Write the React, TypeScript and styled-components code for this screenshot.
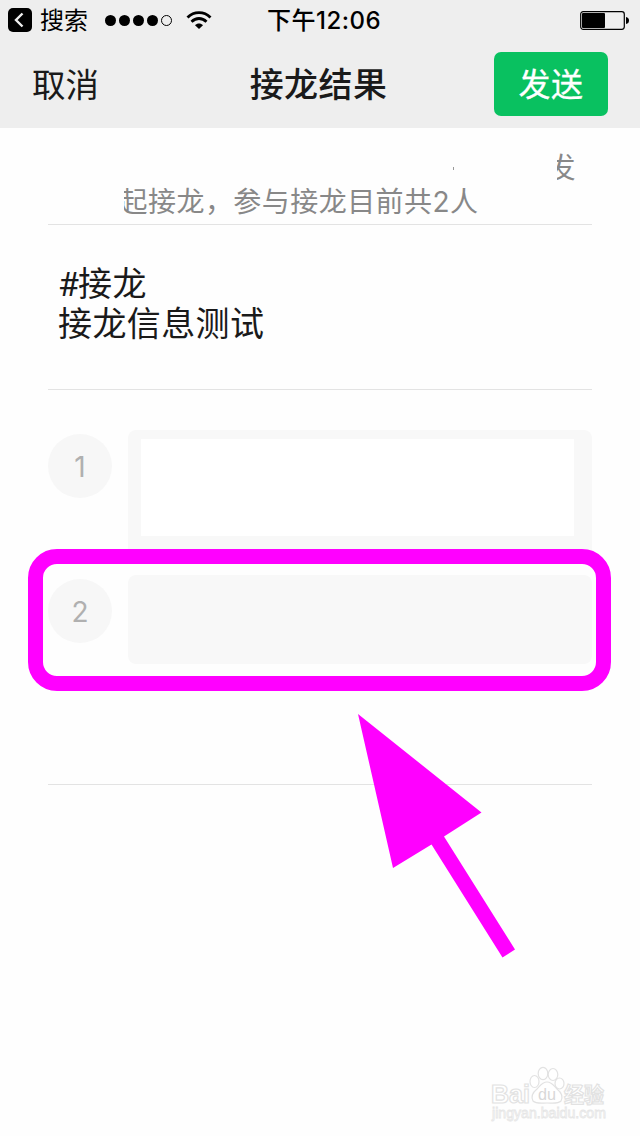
import React from "react";
import styled, { createGlobalStyle } from "styled-components";

const GlobalStyle = createGlobalStyle`
  * { box-sizing: border-box; }
  body {
    margin: 0;
    background: #fefefe;
    font-family: Inter, "Noto Sans CJK SC", sans-serif;
    color: #1a1a1a;
  }
`;

const Screen = styled.div`
  position: relative;
  width: 640px;
  height: 1136px;
  overflow: hidden;
  display: flex;
  flex-direction: column;
`;

const Header = styled.header`
  height: 128px;
  background: #eeeeee;
`;

const StatusBar = styled.div`
  height: 40px;
  display: grid;
  grid-template-columns: 230px 1fr 230px;
  align-items: center;
  color: #000;
`;

const StatusLeft = styled.div`
  display: flex;
  align-items: center;
  padding-left: 8px;
`;

const BackLabel = styled.span`
  margin-left: 8px;
  width: 65px;
  padding-top: 1px;
  font-size: 24px;
  line-height: 38px;
`;

const WifiIcon = styled.svg`
  margin-left: 13px;
`;

const Clock = styled.div`
  text-align: center;
  font-size: 24px;
  line-height: 38px;
  font-weight: 500;
  letter-spacing: 0.5px;
  padding: 2px 0 0 8px;
  white-space: nowrap;
`;

const StatusRight = styled.div`
  display: flex;
  justify-content: flex-end;
  padding-right: 10px;
`;

const NavBar = styled.nav`
  height: 88px;
  display: grid;
  grid-template-columns: 200px 1fr 200px;
  align-items: center;
  padding: 0 32px;
`;

const Cancel = styled.span`
  padding-top: 2px;
  font-size: 33.5px;
  line-height: 64px;
`;

const Title = styled.h1`
  margin: 0;
  padding: 2px 3px 0 0;
  font-size: 34px;
  line-height: 64px;
  font-weight: 500;
  letter-spacing: 0.4px;
  text-align: center;
  white-space: nowrap;
`;

const SendButton = styled.button`
  justify-self: end;
  width: 114px;
  height: 64px;
  padding: 2px 0 0 0;
  border: 0;
  border-radius: 7px;
  background: #09c160;
  color: #fff;
  font: 400 32px/62px Inter, "Noto Sans CJK SC", sans-serif;
  letter-spacing: 0.6px;
  -webkit-text-stroke: 0.3px #fff;
`;

const Content = styled.main`
  padding: 0 48px;
`;

const Summary = styled.section`
  height: 97px;
  padding: 23px 0 0 76px;
  border-bottom: 1px solid #e3e3e3;
  color: #888;
  font-size: 28px;
  line-height: 34px;
  letter-spacing: 0.45px;
`;

const SummaryLine = styled.div<{ $start: number }>`
  display: flex;
  align-items: center;
  height: 34px;
  padding-left: ${(p) => p.$start}px;
  white-space: nowrap;
`;

const Speck = styled.i`
  width: 1px;
  height: 3px;
  margin-right: 103px;
  background: #999;
`;

const Clip = styled.span<{ $width: number }>`
  display: flex;
  justify-content: flex-end;
  width: ${(p) => p.$width}px;
  overflow: hidden;
`;

const Message = styled.section`
  height: 165px;
  padding: 39px 10px 0;
  border-bottom: 1px solid #e3e3e3;
  font-size: 34px;
  line-height: 40px;
  letter-spacing: 0.4px;
`;

const Hash = styled.span`
  display: inline-block;
  width: 20px;
  font-family: Roboto, sans-serif;
  letter-spacing: 0;
`;

const Entries = styled.section`
  height: 395px;
  padding-top: 40px;
  border-bottom: 1px solid #e3e3e3;
`;

const Entry = styled.div<{ $height: number }>`
  display: flex;
  gap: 16px;
  height: ${(p) => p.$height}px;
  margin-bottom: 16px;
`;

const Index = styled.span`
  width: 64px;
  height: 64px;
  margin-top: 4px;
  padding-top: 1px;
  border-radius: 50%;
  background: #f7f7f7;
  color: #b0b0b0;
  font-size: 28px;
  line-height: 64px;
  text-align: center;
`;

const Field = styled.div`
  flex: 1;
  padding: 9px 18px 13px 13px;
  border-radius: 8px;
  background: #f8f8f8;
`;

const Blank = styled.div`
  height: 97px;
  background: #fff;
`;

const Highlight = styled.div`
  position: absolute;
  left: 28px;
  top: 549px;
  width: 583px;
  height: 142px;
  border: 15px solid #ff00ff;
  border-radius: 29px;
`;

const Arrow = styled.svg`
  position: absolute;
  left: 350px;
  top: 705px;
`;

const Watermark = styled.svg`
  position: absolute;
  left: 484px;
  top: 1060px;
  font-family: "Liberation Sans", "Noto Sans CJK SC", sans-serif;
`;

export default function App() {
  return (
    <Screen>
      <GlobalStyle />
      <Header>
        <StatusBar>
          <StatusLeft>
            <svg width="24" height="24" viewBox="0 0 24 24">
              <rect width="24" height="24" rx="5" />
              <path d="M14.500 5.500 8 12l6.500 6.500" fill="none" stroke="#eee" strokeWidth="2.400" />
            </svg>
            <BackLabel>搜索</BackLabel>
            <svg width="68" height="12" viewBox="0 0 68 12">
              {[5.5, 19.5, 33.5, 47.5].map((x) => (
                <circle key={x} cx={x} cy="6.500" r="5.500" />
              ))}
              <circle cx="61.500" cy="6.500" r="5" fill="none" stroke="#000" />
            </svg>
            <WifiIcon width="26" height="20" viewBox="0 0 26 20">
              <g fill="none" stroke="#000" strokeWidth="2.800">
                <path d="M1.500 7.500C8 1 18 1 24.500 7.500" />
                <path d="M5.500 11.800C10 7.400 16 7.400 20.500 11.800" />
              </g>
              <path d="M13 19 9 15.200c2.200-2.200 5.800-2.200 8 0Z" />
            </WifiIcon>
          </StatusLeft>
          <Clock>下午12:06</Clock>
          <StatusRight>
            <svg width="50" height="20" viewBox="0 0 50 20">
              <rect x="0.700" y="1.700" width="43.600" height="17.600" rx="2.500" fill="none" stroke="#000" strokeWidth="1.200" />
              <rect x="2" y="3" width="23" height="15" rx="1" />
              <path d="M46 7q3 .5 3 3.500t-3 3.500Z" />
            </svg>
          </StatusRight>
        </StatusBar>
        <NavBar>
          <Cancel>取消</Cancel>
          <Title>接龙结果</Title>
          <SendButton>发送</SendButton>
        </NavBar>
      </Header>
      <Content>
        <Summary>
          <SummaryLine $start={329}>
            <Speck />
            <Clip $width={19}>发</Clip>
          </SummaryLine>
          <SummaryLine $start={0}>
            <Clip $width={24}>起</Clip>接龙，参与接龙目前共2人
          </SummaryLine>
        </Summary>
        <Message>
          <Hash>#</Hash>接龙
          <br />
          接龙信息测试
        </Message>
        <Entries>
          <Entry $height={129}>
            <Index>1</Index>
            <Field>
              <Blank />
            </Field>
          </Entry>
          <Entry $height={89}>
            <Index>2</Index>
            <Field />
          </Entry>
        </Entries>
      </Content>
      <Highlight />
      <Arrow width="170" height="260" viewBox="350 705 170 260">
        <path d="M358 714 481.500 812.500 444 836.500 515 949.500 502.500 957.500 431.500 844.500 393 868Z" fill="#f0f" />
      </Arrow>
      <Watermark width="130" height="70" viewBox="484 1060 130 70">
        <g fill="#fff" stroke="#e2e2e2" strokeWidth="1.200">
          <text x="491" y="1103" fontSize="26" fontWeight="700" textLength="39" lengthAdjust="spacingAndGlyphs">Bai</text>
          <text x="564" y="1102" fontSize="21" fontWeight="700" textLength="40" lengthAdjust="spacingAndGlyphs">经验</text>
          <ellipse cx="534.500" cy="1081.500" rx="4.500" ry="6" />
          <ellipse cx="543" cy="1073.500" rx="4.800" ry="6.200" />
          <ellipse cx="553" cy="1074.500" rx="4.800" ry="6" />
          <ellipse cx="559.500" cy="1083.500" rx="4.500" ry="5.500" />
          <path d="M547 1082c5 0 7 4 10 7 5 4 6 8 4 12-3 3-8 2-14 2s-11 1-14-2c-2-4-1-8 4-12 3-3 5-7 10-7Z" />
        </g>
        <text x="538" y="1100" fontSize="17" fill="#d8d8d8" textLength="18" lengthAdjust="spacingAndGlyphs">du</text>
        <text x="492" y="1118" fontSize="14" fill="#fff" stroke="#e6e6e6" strokeWidth="0.800" textLength="114" lengthAdjust="spacingAndGlyphs">jingyan.baidu.com</text>
      </Watermark>
    </Screen>
  );
}
